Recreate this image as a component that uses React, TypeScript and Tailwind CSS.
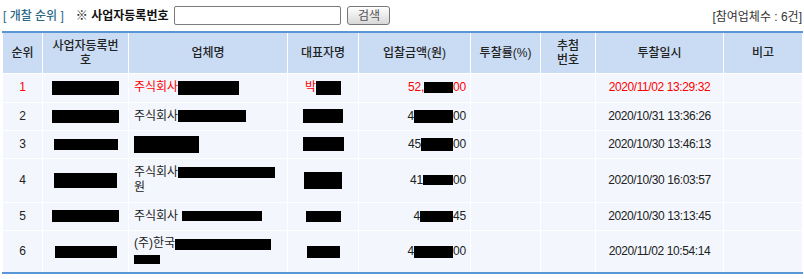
import React from 'react';

type Cell = React.ReactNode;

const Box: React.FC<{ w: string; h: string }> = ({ w, h }) => (
  <span className={`inline-block bg-black align-middle ${w} ${h}`} />
);

const rows: {
  no: string;
  red?: boolean;
  h: string;
  biz: Cell;
  name: Cell;
  rep: Cell;
  amount: Cell;
  date: string;
}[] = [
  {
    no: '1',
    red: true,
    h: 'h-[29px]',
    biz: <Box w="w-[67px]" h="h-[14px]" />,
    name: (
      <>
        주식회사<Box w="w-[61px]" h="h-[14px]" />
      </>
    ),
    rep: (
      <>
        박<Box w="w-[25px]" h="h-[14px]" />
      </>
    ),
    amount: (
      <>
        52,<Box w="w-[29px]" h="h-[11px]" />00
      </>
    ),
    date: '2020/11/02 13:29:32',
  },
  {
    no: '2',
    h: 'h-[28px]',
    biz: <Box w="w-[67px]" h="h-[13px]" />,
    name: (
      <>
        주식회사<Box w="w-[68px]" h="h-[12px]" />
      </>
    ),
    rep: <Box w="w-[40px]" h="h-[14px]" />,
    amount: (
      <>
        4<Box w="w-[39px]" h="h-[13px]" />00
      </>
    ),
    date: '2020/10/31 13:36:26',
  },
  {
    no: '3',
    h: 'h-[28px]',
    biz: <Box w="w-[64px]" h="h-[11px]" />,
    name: <Box w="w-[65px]" h="h-[17px]" />,
    rep: <Box w="w-[41px]" h="h-[14px]" />,
    amount: (
      <>
        45<Box w="w-[32px]" h="h-[13px]" />00
      </>
    ),
    date: '2020/10/30 13:46:13',
  },
  {
    no: '4',
    h: 'h-[44px]',
    biz: <Box w="w-[63px]" h="h-[15px]" />,
    name: (
      <>
        주식회사<Box w="w-[97px]" h="h-[11px]" />
        <br />원
      </>
    ),
    rep: <Box w="w-[38px]" h="h-[17px]" />,
    amount: (
      <>
        41<Box w="w-[30px]" h="h-[10px]" />00
      </>
    ),
    date: '2020/10/30 16:03:57',
  },
  {
    no: '5',
    h: 'h-[28px]',
    biz: <Box w="w-[67px]" h="h-[12px]" />,
    name: (
      <>
        주식회사 <Box w="w-[80px]" h="h-[10px]" />
      </>
    ),
    rep: <Box w="w-[35px]" h="h-[11px]" />,
    amount: (
      <>
        4<Box w="w-[33px]" h="h-[11px]" />45
      </>
    ),
    date: '2020/10/30 13:13:45',
  },
  {
    no: '6',
    h: 'h-[43px]',
    biz: <Box w="w-[62px]" h="h-[12px]" />,
    name: (
      <>
        (주)한국<Box w="w-[96px]" h="h-[11px]" />
        <br />
        <Box w="w-[26px]" h="h-[9px]" />
      </>
    ),
    rep: <Box w="w-[33px]" h="h-[12px]" />,
    amount: (
      <>
        4<Box w="w-[39px]" h="h-[12px]" />00
      </>
    ),
    date: '2020/11/02 10:54:14',
  },
];

const th = 'border border-white font-medium text-center align-middle leading-[14px] text-[#222]';
const td = 'border border-white align-middle leading-[15px]';

export default function App() {
  return (
    <div className="w-[804px] bg-white px-[2px] text-[12px] font-['Liberation_Sans','Noto_Sans_CJK_KR',sans-serif] text-[#222]">
      {/* search bar */}
      <div className="flex h-[31px] items-center">
        <span className="pl-[1px] font-medium text-[#2c6888]">[ 개찰 순위 ]</span>
        <span className="ml-[12px] font-bold text-[#111]">※ 사업자등록번호</span>
        <input
          className="ml-[6px] h-[19px] w-[167px] rounded-[2px] border border-[#7b7b7b] bg-white px-1 outline-none"
          type="text"
        />
        <button className="ml-[6px] h-[19px] w-[43px] rounded-[3px] border border-[#777] bg-gradient-to-b from-white to-[#d8d8d8] text-[12px] leading-none text-[#555]">
          검색
        </button>
        <span className="ml-auto self-end pb-[5px] text-[#333]">[참여업체수 : 6건]</span>
      </div>

      <table className="w-[800px] table-fixed border-collapse border-y-2 border-[#5996d6]">
        <colgroup>
          <col className="w-[40px]" />
          <col className="w-[86px]" />
          <col className="w-[159px]" />
          <col className="w-[71px]" />
          <col className="w-[112px]" />
          <col className="w-[70px]" />
          <col className="w-[55px]" />
          <col className="w-[128px]" />
          <col className="w-[79px]" />
        </colgroup>
        <thead>
          <tr className="h-[41px] bg-[#c9dcf4]">
            <th className={th}>순위</th>
            <th className={th}>
              사업자등록번
              <br />호
            </th>
            <th className={th}>업체명</th>
            <th className={th}>대표자명</th>
            <th className={th}>입찰금액(원)</th>
            <th className={th}>투찰률(%)</th>
            <th className={th}>
              추첨
              <br />
              번호
            </th>
            <th className={th}>투찰일시</th>
            <th className={th}>비고</th>
          </tr>
        </thead>
        <tbody>
          {rows.map((r) => (
            <tr key={r.no} className={`${r.h} bg-[#f3f7fd] ${r.red ? 'text-[#ff0000]' : 'text-[#222]'}`}>
              <td className={`${td} text-center`}>{r.no}</td>
              <td className={`${td} text-center`}>{r.biz}</td>
              <td className={`${td} pl-[5px] text-left`}>{r.name}</td>
              <td className={`${td} text-center`}>{r.rep}</td>
              <td className={`${td} pr-[4px] text-right tracking-[-0.2px]`}>{r.amount}</td>
              <td className={td}></td>
              <td className={td}></td>
              <td className={`${td} text-center tracking-[-0.4px]`}>{r.date}</td>
              <td className={td}></td>
            </tr>
          ))}
        </tbody>
      </table>
    </div>
  );
}
